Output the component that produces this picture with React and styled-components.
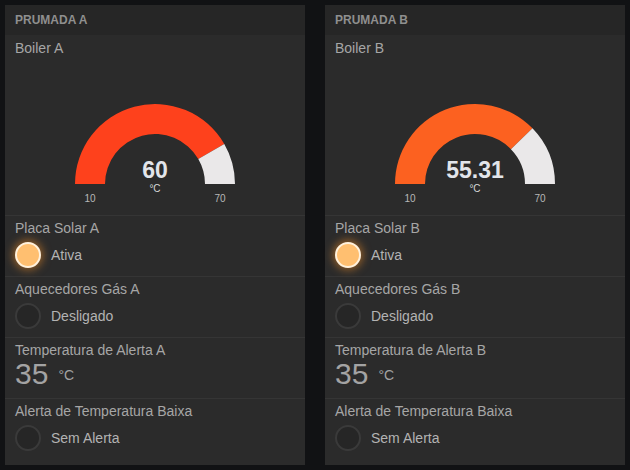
import React from 'react';
import styled, { createGlobalStyle } from 'styled-components';

const GlobalStyle = createGlobalStyle`
  html, body {
    margin: 0;
    padding: 0;
    background: #111214;
    font-family: "Liberation Sans", Arial, sans-serif;
  }
`;

const Page = styled.div`
  display: flex;
  gap: 20px;
  padding: 5px;
  width: 630px;
  height: 470px;
  box-sizing: border-box;
`;

const Panel = styled.section`
  width: 300px;
  height: 460px;
  background: #2b2b2b;
  display: flex;
  flex-direction: column;
`;

const Header = styled.div`
  height: 30px;
  background: #262626;
  padding-left: 10px;
  display: flex;
  align-items: center;
  font-size: 12px;
  font-weight: bold;
  color: #8f8f8f;
  text-transform: uppercase;
`;

const Widget = styled.div`
  box-sizing: border-box;
  height: ${(p) => p.$height}px;
  padding: ${(p) => p.$top || 4}px 10px 0;
  border-bottom: ${(p) => (p.$last ? 'none' : '1px solid #353535')};
  display: flex;
  flex-direction: column;
`;

const Label = styled.div`
  font-size: 14px;
  line-height: 17px;
  color: #a6a6a6;
  white-space: nowrap;
`;

const GaugeSvg = styled.svg`
  display: block;
  margin-left: -10px;
  font-family: "Liberation Sans", Arial, sans-serif;
`;

const LedRow = styled.div`
  display: flex;
  align-items: center;
  gap: 10px;
  margin-top: 5px;
`;

const Led = styled.span`
  box-sizing: border-box;
  width: 26px;
  height: 26px;
  border-radius: 50%;
  background: ${(p) => (p.$on ? '#ffbf70' : '#262626')};
  border: 2px solid ${(p) => (p.$on ? '#fff1dc' : '#3a3a3a')};
  box-shadow: ${(p) => (p.$on ? '0 0 8px 2px rgba(255, 150, 40, 0.5)' : 'none')};
`;

const LedText = styled.span`
  font-size: 14px;
  color: #b3b3b3;
`;

const TempRow = styled.div`
  display: flex;
  align-items: flex-start;
  gap: 10px;
  color: #a3a3a3;
`;

const TempValue = styled.span`
  font-size: 30px;
  line-height: 30px;
`;

const TempUnit = styled.span`
  font-size: 14px;
  margin-top: 8px;
`;

const polar = (cx, cy, r, f) => {
  const a = Math.PI * (1 - f);
  return [cx + r * Math.cos(a), cy - r * Math.sin(a)];
};

const band = (cx, cy, R, r, f0, f1) => {
  const [x0, y0] = polar(cx, cy, R, f0);
  const [x1, y1] = polar(cx, cy, R, f1);
  const [x2, y2] = polar(cx, cy, r, f1);
  const [x3, y3] = polar(cx, cy, r, f0);
  return `M${x0} ${y0} A${R} ${R} 0 0 1 ${x1} ${y1} L${x2} ${y2} A${r} ${r} 0 0 0 ${x3} ${y3} Z`;
};

function Gauge({ value, min, max, color }) {
  const cx = 150;
  const cy = 127;
  const f = (value - min) / (max - min);
  return (
    <GaugeSvg width="300" height="158" viewBox="0 0 300 158">
      <path d={band(cx, cy, 80, 50, 0, f)} fill={color} />
      <path d={band(cx, cy, 80, 50, f, 1)} fill="#eae8e9" />
      <text x={cx} y="121" textAnchor="middle" fontSize="23" fontWeight="bold" fill="#e2e5ea">
        {value}
      </text>
      <text x={cx} y="135" textAnchor="middle" fontSize="10" fill="#d8d8d8">°C</text>
      <text x="85" y="145" textAnchor="middle" fontSize="10" fill="#b8b8b8">{min}</text>
      <text x="215" y="145" textAnchor="middle" fontSize="10" fill="#b8b8b8">{max}</text>
    </GaugeSvg>
  );
}

function Prumada({ id, value, color }) {
  return (
    <Panel>
      <Header>Prumada {id}</Header>
      <Widget $height={181} $top={5}>
        <Label>Boiler {id}</Label>
        <Gauge value={value} min={10} max={70} color={color} />
      </Widget>
      <Widget $height={61}>
        <Label>Placa Solar {id}</Label>
        <LedRow>
          <Led $on />
          <LedText>Ativa</LedText>
        </LedRow>
      </Widget>
      <Widget $height={61}>
        <Label>Aquecedores Gás {id}</Label>
        <LedRow>
          <Led />
          <LedText>Desligado</LedText>
        </LedRow>
      </Widget>
      <Widget $height={61}>
        <Label>Temperatura de Alerta {id}</Label>
        <TempRow>
          <TempValue>35</TempValue>
          <TempUnit>°C</TempUnit>
        </TempRow>
      </Widget>
      <Widget $height={66} $last>
        <Label>Alerta de Temperatura Baixa</Label>
        <LedRow>
          <Led />
          <LedText>Sem Alerta</LedText>
        </LedRow>
      </Widget>
    </Panel>
  );
}

export default function App() {
  return (
    <>
      <GlobalStyle />
      <Page>
        <Prumada id="A" value={60} color="#fe411c" />
        <Prumada id="B" value={55.31} color="#fc6120" />
      </Page>
    </>
  );
}
